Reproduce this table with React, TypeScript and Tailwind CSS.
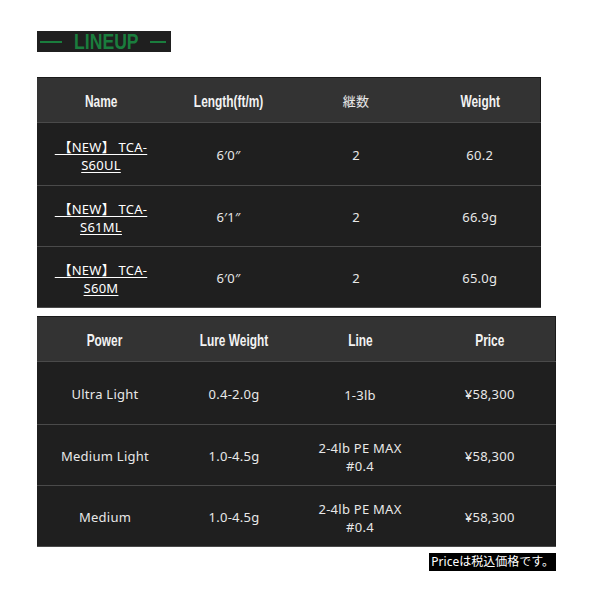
import React from "react";

const spec = [
  { name: "S60UL", length: "6′0″", pieces: "2", weight: "60.2" },
  { name: "S61ML", length: "6′1″", pieces: "2", weight: "66.9g" },
  { name: "S60M", length: "6′0″", pieces: "2", weight: "65.0g" },
];

const power = [
  { power: "Ultra Light", lure: "0.4-2.0g", line: ["1-3lb"], price: "¥58,300" },
  { power: "Medium Light", lure: "1.0-4.5g", line: ["2-4lb PE MAX", "#0.4"], price: "¥58,300" },
  { power: "Medium", lure: "1.0-4.5g", line: ["2-4lb PE MAX", "#0.4"], price: "¥58,300" },
];

const body = "font-['Noto_Sans','Noto_Sans_CJK_JP',sans-serif] text-[13px] text-[#e8e8e8] tracking-[0.02em]";
const cell = "p-0 pt-[4px] text-center align-middle";

function Head({ children }: { children: React.ReactNode }) {
  // condensed heading: no Oswald offline, so squeeze Liberation Sans
  return (
    <th className="h-[45px] p-0 pt-[3px] text-center align-middle border-b border-[#4a4a4a]">
      <span className="inline-block scale-x-[0.7] font-['Liberation_Sans',sans-serif] font-bold text-[17px] text-[#f2f2f2]">
        {children}
      </span>
    </th>
  );
}

export default function App() {
  return (
    <div className="w-[600px] h-[600px] bg-white pt-[31px] pl-[37px]">
      <div className="flex items-center justify-between w-[134px] h-[21px] bg-[#1f1f1f] px-[3px]">
        <span className="w-[22px] h-[2px] bg-[#1a7d3d]" />
        <span className="inline-block scale-x-[0.8] font-['Liberation_Sans',sans-serif] font-bold text-[22px] leading-none text-[#1a7d3d]">
          LINEUP
        </span>
        <span className="w-[16px] h-[2px] bg-[#1a7d3d] mr-[2px]" />
      </div>

      <table className="mt-[25px] w-[503px] table-fixed border-collapse bg-[#1f1f1f] border-t border-r border-[#1a1a1a]">
        <colgroup>
          <col className="w-[128px]" />
          <col className="w-[127px]" />
          <col className="w-[128px]" />
          <col className="w-[120px]" />
        </colgroup>
        <thead className="bg-[#333333]">
          <tr>
            <Head>Name</Head>
            <Head>Length(ft/m)</Head>
            <th className={`h-[45px] p-0 pt-[3px] text-center align-middle border-b border-[#4a4a4a] font-normal ${body}`}>継数</th>
            <Head>Weight</Head>
          </tr>
        </thead>
        <tbody className={body}>
          {spec.map((r, i) => (
            <tr key={r.name} className={`${i === 0 ? "h-[63px]" : "h-[61px]"} border-b border-[#4a4a4a]`}>
              <td className={`${cell} leading-[18px]`}>
                <a className="underline underline-offset-2 text-white">&nbsp;【NEW】&nbsp;TCA-<br />{r.name}</a>
              </td>
              <td className={cell}>{r.length}</td>
              <td className={cell}>{r.pieces}</td>
              <td className={cell}>{r.weight}</td>
            </tr>
          ))}
        </tbody>
      </table>

      <table className="mt-[8px] w-[518px] table-fixed border-collapse bg-[#1f1f1f] border-t border-r border-[#1a1a1a]">
        <colgroup>
          <col className="w-[136px]" />
          <col className="w-[122px]" />
          <col className="w-[130px]" />
          <col className="w-[130px]" />
        </colgroup>
        <thead className="bg-[#333333]">
          <tr>
            <Head>Power</Head>
            <Head>Lure Weight</Head>
            <Head>Line</Head>
            <Head>Price</Head>
          </tr>
        </thead>
        <tbody className={body}>
          {power.map((r, i) => (
            <tr key={r.power} className={`${i === 0 ? "h-[63px]" : "h-[61px]"} border-b border-[#4a4a4a]`}>
              <td className={cell}>{r.power}</td>
              <td className={cell}>{r.lure}</td>
              <td className={`${cell} leading-[18px]`}>
                {r.line.map((l) => (
                  <div key={l}>{l}</div>
                ))}
              </td>
              <td className={cell}>{r.price}</td>
            </tr>
          ))}
        </tbody>
      </table>

      <div className="w-[519px] flex justify-end mt-[6px]">
        <span className="bg-black text-white px-[2px] h-[18px] leading-[18px] text-[12px] font-['Noto_Sans','Noto_Sans_CJK_JP',sans-serif]">
          Priceは税込価格です。
        </span>
      </div>
    </div>
  );
}
